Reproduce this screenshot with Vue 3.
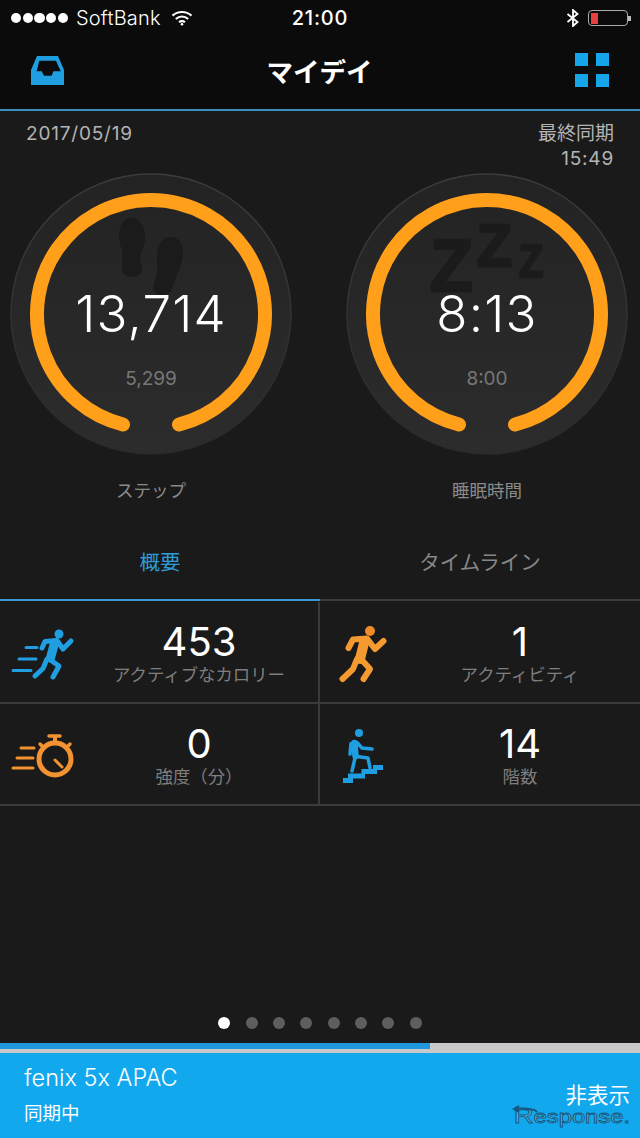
<template>
  <div class="page">
    <!-- Status bar + nav -->
    <div class="top">
      <div class="status">
        <div class="status-left">
          <span class="signal"><i v-for="n in 5" :key="n"></i></span>
          <span class="carrier">SoftBank</span>
          <svg class="wifi" width="22" height="16" viewBox="0 0 22 16" fill="none" stroke="#fff" stroke-width="2.2">
            <path d="M1.500 5.600C7 .8 15 .8 20.500 5.600"/>
            <path d="M4.800 9C8.500 5.800 13.500 5.800 17.200 9"/>
            <path d="M8 12.200c1.800-1.400 4.200-1.400 6 0"/>
            <circle cx="11" cy="14.300" r="1.300" fill="#fff" stroke="none"/>
          </svg>
        </div>
        <span class="clock">21:00</span>
        <div class="status-right">
          <svg width="14" height="18" viewBox="0 0 14 18" fill="none" stroke="#fff" stroke-width="1.800">
            <path d="M1.500 5l10 8-4.500 4V1l4.500 4-10 8"/>
          </svg>
          <div class="battery"><span class="battery-fill"></span></div>
          <span class="battery-tip"></span>
        </div>
      </div>
      <div class="nav">
        <svg class="inbox" width="33" height="29" viewBox="0 0 33 29" fill="#1f9fe2">
          <path fill-rule="evenodd" d="M6 0H27L33 14V29H0V14ZM8.300 4.700 5.700 15.300H10.700L13 19.700H20.700L22.300 15.300H29.700L25 4.700Z"/>
        </svg>
        <span class="nav-title">マイデイ</span>
        <div class="grid-icon"><i v-for="n in 4" :key="n"></i></div>
      </div>
    </div>

    <div class="date-row">
      <span class="date-num">2017/05/19</span>
      <span class="sync">最終同期<br><span class="date-num">15:49</span></span>
    </div>

    <!-- Rings -->
    <div class="rings">
      <div v-for="r in rings" :key="r.label" class="ring-col">
        <div class="ring">
          <svg width="282" height="282" viewBox="0 0 282 282">
            <defs>
              <linearGradient :id="'disc-' + r.kind" x1="0" y1="0" x2="0" y2="1">
                <stop offset="0" stop-color="#232323"/>
                <stop offset="1" stop-color="#2c2c2c"/>
              </linearGradient>
              <linearGradient :id="'edge-' + r.kind" x1="0" y1="0" x2="0" y2="1">
                <stop offset="0" stop-color="#3c3c3c"/>
                <stop offset="0.6" stop-color="#303030"/>
                <stop offset="1" stop-color="#2a2a2a"/>
              </linearGradient>
            </defs>
            <circle cx="141" cy="141" r="140" :fill="'url(#disc-' + r.kind + ')'" :stroke="'url(#edge-' + r.kind + ')'" stroke-width="1.500"/>
            <g v-if="r.kind === 'steps'" fill="#1b1b1b">
              <path d="M122 45C131 45 135 55 135 66C135 74 130 78 130 85C130 89 132 92 132 95C132 100 128 104 122 104C116 104 112 100 112 95C112 88 113 82 112 77C110 72 109 68 109 63C109 52 114 45 122 45Z"/>
              <path d="M161 64C169 64 173 71 173 80C173 90 169 96 166 104C164 110 163 116 159 120C155 123 148 123 145 119C142 115 144 110 146 104C148 98 147 92 147 84C147 72 152 64 161 64Z"/>
            </g>
            <g v-else class="zzz">
              <text x="84" y="118" font-size="74" textLength="43" lengthAdjust="spacingAndGlyphs">Z</text>
              <text x="131" y="93" font-size="60" textLength="35" lengthAdjust="spacingAndGlyphs">Z</text>
              <text x="173" y="104" font-size="46" textLength="24" lengthAdjust="spacingAndGlyphs">Z</text>
            </g>
            <path d="M113 251.500A114 114 0 1 1 169 251.500" fill="none" stroke="#ff9f1a" stroke-width="14" stroke-linecap="round"/>
          </svg>
          <div class="ring-text">
            <span class="ring-value">{{ r.value }}</span>
            <span class="ring-goal">{{ r.goal }}</span>
          </div>
        </div>
        <span class="ring-label">{{ r.label }}</span>
      </div>
    </div>

    <!-- Tabs -->
    <div class="tabs">
      <div class="tab active">概要</div>
      <div class="tab">タイムライン</div>
    </div>

    <!-- Stats -->
    <div class="stats">
      <div class="cell">
        <svg class="cell-icon" width="80" height="102" viewBox="0 0 80 102" fill="none" stroke="#1f9fe2" stroke-linecap="round" stroke-linejoin="round">
          <circle cx="59" cy="32" r="4.500" fill="#1f9fe2" stroke="none"/>
          <path d="M54.500 41 50.500 56" stroke-width="9"/>
          <path d="M42 46 45 39.500 57 38.500 63 47 71 39M49 57 59 64 53 75M47 57 43 66.500 35 74" stroke-width="5"/>
          <path d="M26 45.500H37M19 57H36M13 68.500H31" stroke-width="3"/>
        </svg>
        <div class="cell-text"><span class="cell-value">453</span><span class="cell-label">アクティブなカロリー</span></div>
      </div>
      <div class="cell">
        <svg class="cell-icon" width="80" height="102" viewBox="0 0 80 102" fill="none" stroke="#f59a30" stroke-linecap="round" stroke-linejoin="round">
          <circle cx="50" cy="29" r="5" fill="#f08a2a" stroke="none"/>
          <path d="M44.500 39 40 57" stroke-width="10"/>
          <path d="M28.500 46 33 37.500 47 36.500 55 47 63.500 39M41 57 50 67 43.500 77M37 57 33 67 22.500 77" stroke-width="6"/>
        </svg>
        <div class="cell-text"><span class="cell-value">1</span><span class="cell-label">アクティビティ</span></div>
      </div>
      <div class="cell">
        <svg class="cell-icon" width="80" height="102" viewBox="0 0 80 102" fill="none" stroke="#f39230" stroke-linecap="round" stroke-linejoin="round">
          <circle cx="55" cy="55" r="16" stroke-width="5"/>
          <path d="M55 33v5" stroke-width="4"/>
          <path d="M49 32H60M40 40l2 2M70 40l-2 2" stroke-width="3.500"/>
          <path d="M55 56 62 63" stroke-width="3"/>
          <path d="M21 44H34M17 54H33M13 64H33" stroke-width="3"/>
        </svg>
        <div class="cell-text"><span class="cell-value">0</span><span class="cell-label">強度（分）</span></div>
      </div>
      <div class="cell">
        <svg class="cell-icon" width="80" height="102" viewBox="0 0 80 102" fill="none" stroke="#1f9fe2" stroke-linecap="round" stroke-linejoin="round">
          <circle cx="39" cy="29" r="4" fill="#1f9fe2" stroke="none"/>
          <path d="M34.500 39 35.500 52" stroke-width="6.500"/>
          <path d="M31 39.500 30 50M37 38.500 42 44 52 45M35 54 32 67M37 52.500 48 54 50 64" stroke-width="3.500"/>
          <path d="M23 74H28V69.500H41.500V65H53V61H63V66H57V70H45V74.500H33V79H23Z" fill="#1f9fe2" stroke="none"/>
        </svg>
        <div class="cell-text"><span class="cell-value">14</span><span class="cell-label">階数</span></div>
      </div>
    </div>

    <!-- Pager -->
    <div class="pager">
      <i v-for="n in 8" :key="n" :class="{ on: n === 1 }"></i>
    </div>

    <!-- Sync banner -->
    <div class="progress"><span></span></div>
    <div class="banner">
      <div class="banner-left">
        <span class="device">fenix 5x APAC</span>
        <span class="syncing">同期中</span>
      </div>
      <span class="hide">非表示</span>
      <div class="watermark">
        <svg width="26" height="9" viewBox="0 0 26 9" fill="none" stroke="#15567d" stroke-width="2"><path d="M25 7C23 4 20 4 3 4M7 1 2 4l5 3"/></svg>
        <span class="wm-text"><span class="wm-r">R</span>esponse.</span>
      </div>
    </div>
  </div>
</template>

<script setup>
const rings = [
  { kind: 'steps', value: '13,714', goal: '5,299', label: 'ステップ' },
  { kind: 'sleep', value: '8:13', goal: '8:00', label: '睡眠時間' },
]
</script>

<style>
html, body { margin: 0; background: #1a1a1a; }
</style>

<style scoped>
.page {
  width: 640px;
  height: 1138px;
  background: #1a1a1a;
  color: #fff;
  font-family: Inter, "Noto Sans CJK JP", sans-serif;
  display: flex;
  flex-direction: column;
  overflow: hidden;
}

.top { height: 109px; background: #0b0b0b; border-bottom: 2px solid #3b8fbf; flex-shrink: 0; }
.status { height: 36px; display: flex; align-items: center; justify-content: space-between; padding: 0 9px 0 11px; position: relative; }
.status-left { display: flex; align-items: center; }
.signal { display: flex; gap: 1.500px; margin-right: 8px; }
.signal i { width: 10.200px; height: 10.200px; border-radius: 50%; background: #fff; }
.carrier { font-size: 20px; font-weight: 300; letter-spacing: 0.200px; margin-right: 10px; }
.clock { position: absolute; left: 0; right: 0; text-align: center; font-size: 20px; font-weight: 500; letter-spacing: 0.800px; }
.status-right { display: flex; align-items: center; }
.status-right svg { margin-right: 8px; }
.battery { width: 40px; height: 16px; border: 1.500px solid #aaa; border-radius: 4px; padding: 1.500px; box-sizing: border-box; }
.battery-fill { display: block; width: 7px; height: 100%; background: #e8403c; }
.battery-tip { width: 3px; height: 5px; background: #bbb; }

.nav { height: 73px; display: flex; align-items: center; justify-content: space-between; padding: 0 31px 4px; box-sizing: border-box; }
.nav-title { font-size: 26.500px; font-weight: 700; }
.grid-icon { display: grid; grid-template-columns: 13px 13px; gap: 8px; margin-bottom: 2px; }
.grid-icon i { height: 13px; background: #16a4ea; }

.date-row { height: 62px; display: flex; justify-content: space-between; padding: 10px 26px 0; box-sizing: border-box; font-size: 19px; line-height: 25px; color: #b4b4b4; flex-shrink: 0; }
.date-num { letter-spacing: 0.800px; }
.sync { text-align: right; }

.rings { display: flex; gap: 54px; padding-left: 10px; height: 350px; flex-shrink: 0; }
.ring-col { width: 282px; display: flex; flex-direction: column; align-items: center; }
.ring { width: 282px; height: 282px; position: relative; }
.ring svg { display: block; }
.zzz { font-family: "Liberation Sans", sans-serif; font-weight: 700; fill: #1b1b1b; stroke: #1b1b1b; stroke-width: 2.500px; }
.ring-text { position: absolute; inset: 0; display: flex; flex-direction: column; align-items: center; }
.ring-value { margin-top: 108px; font-size: 51px; line-height: 66px; font-weight: 300; letter-spacing: 1.200px; }
.ring-goal { margin-top: 19px; font-size: 19px; line-height: 26px; color: #777; }
.ring-label { margin-top: 25px; font-size: 17.500px; line-height: 22px; color: #8a8a8a; }

.tabs { display: flex; height: 78px; flex-shrink: 0; }
.tab { width: 320px; display: flex; align-items: center; justify-content: center; font-size: 20.500px; color: #878787; border-bottom: 2px solid #3c3c3c; box-sizing: border-box; }
.tab.active { color: #2f9bd8; border-bottom-color: #3b97d0; }

.stats { display: grid; grid-template-columns: 320px 320px; grid-auto-rows: 102px; flex-shrink: 0; margin-top: 1px; }
.cell { display: flex; border-bottom: 2px solid #3a3a3a; box-sizing: border-box; height: 102px; }
.cell:nth-child(odd) { border-right: 2px solid #3a3a3a; }
.cell-icon { flex-shrink: 0; }
.cell-text { width: 240px; display: flex; flex-direction: column; align-items: center; }
.cell-value { margin-top: 18px; font-size: 40px; line-height: 44px; }
.cell-label { font-size: 17.400px; line-height: 22px; color: #7e7e7e; }

.pager { flex: 1; display: flex; align-items: flex-end; justify-content: center; gap: 15.400px; padding-bottom: 14px; }
.pager i { width: 12px; height: 12px; border-radius: 50%; background: #5e5e5e; }
.pager i.on { background: #fff; }

.progress { height: 10px; background: #c9c9c9; flex-shrink: 0; }
.progress span { display: block; width: 430px; height: 6px; background: #1f97dc; }

.banner { height: 85px; background: #12a8ee; display: flex; justify-content: space-between; padding: 0 10px 0 24px; position: relative; flex-shrink: 0; }
.banner-left { display: flex; flex-direction: column; }
.device { margin-top: 11px; font-size: 23.500px; font-weight: 300; line-height: 28px; }
.syncing { margin-top: 8px; font-size: 18.500px; line-height: 26px; }
.hide { margin-top: 28px; font-size: 21.500px; line-height: 28px; }
.watermark { position: absolute; right: 10px; top: 52px; width: 120px; height: 22px; display: flex; align-items: flex-end; justify-content: flex-end; font-family: "Liberation Sans", sans-serif; }
.watermark svg { position: absolute; left: 2px; top: 0; z-index: 1; }
.wm-text { font-size: 19px; line-height: 20px; color: #4fb0e0; -webkit-text-stroke: 0.800px #15567d; transform: scaleX(1.25); transform-origin: right bottom; white-space: nowrap; }
.wm-r { font-size: 22px; }
</style>
